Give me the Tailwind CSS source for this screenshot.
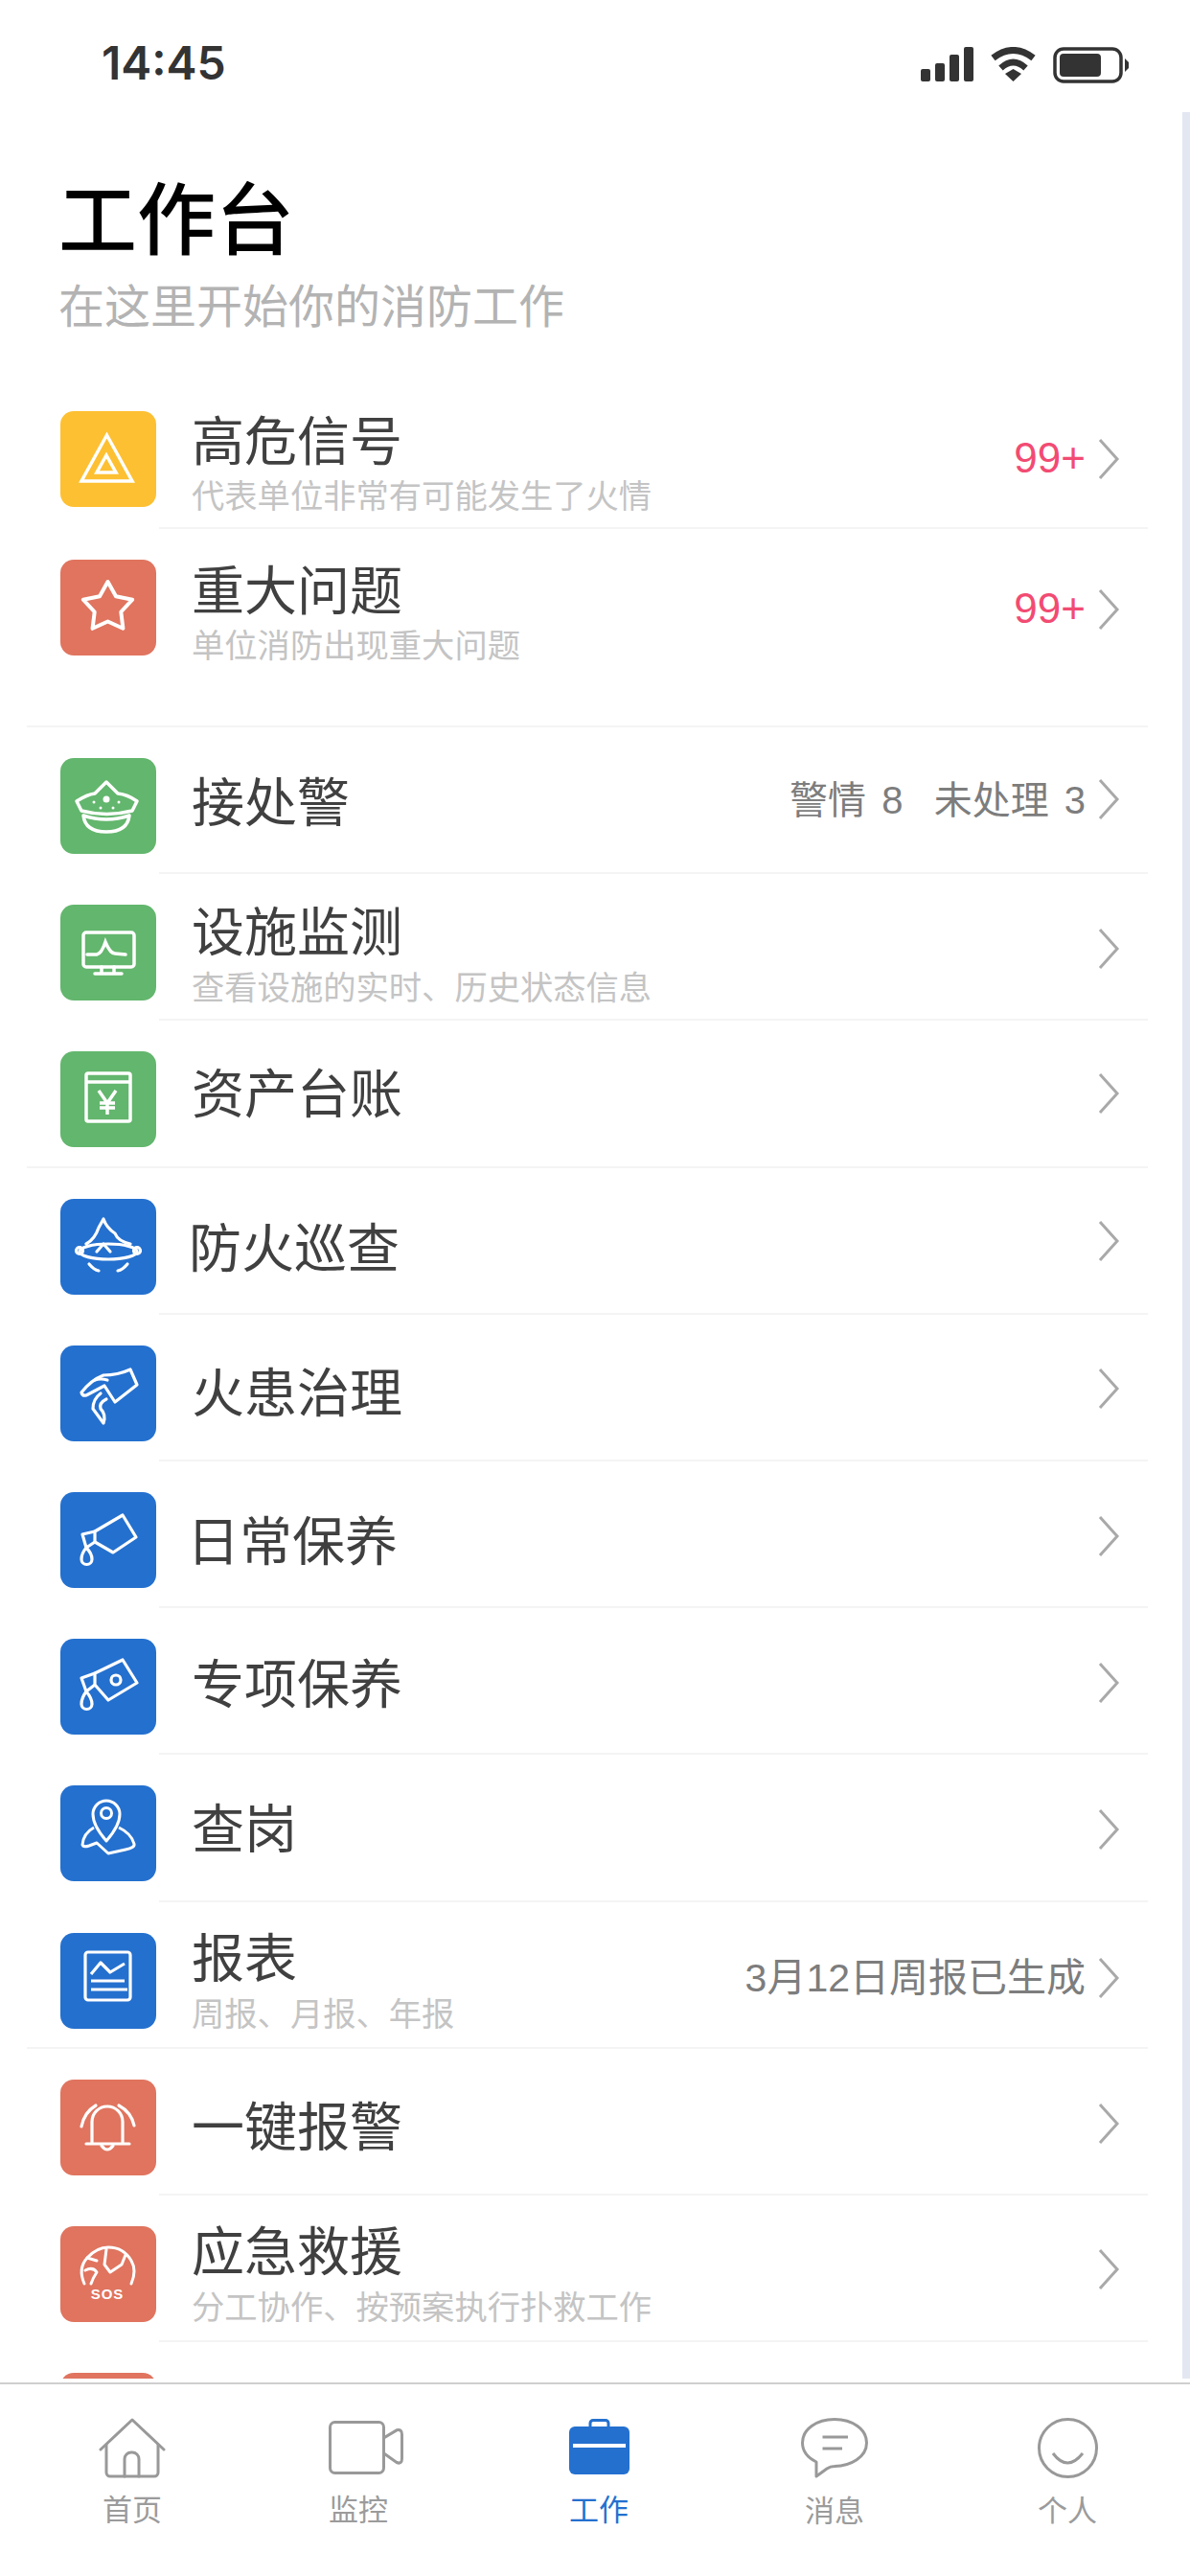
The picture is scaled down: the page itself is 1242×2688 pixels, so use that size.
<!DOCTYPE html>
<html lang="zh-CN">
<head>
<meta charset="UTF-8">
<meta name="viewport" content="width=device-width, initial-scale=1.0">
<title>工作台</title>
<script src="https://cdn.jsdelivr.net/npm/@tailwindcss/browser@4"></script>
</head>
<body class="bg-white font-['Noto_Sans_CJK_SC','Noto_Sans',sans-serif]">
<div class="w-[1242px] h-[2688px] overflow-hidden flex flex-col bg-white">

  <!-- status bar -->
  <div class="h-[117px] shrink-0 flex items-start pt-[38px]">
    <span class="ml-[106px] text-[48px] leading-[56px] font-semibold text-[#333] font-['Inter',sans-serif]">14:45</span>
    <div class="ml-auto mr-[63px] mt-[11px] flex items-start">
      <svg class="w-[55px] h-[36px]" viewBox="0 0 55 36" fill="#333"><rect x="0" y="23" width="10" height="13" rx="2"/><rect x="15" y="17" width="10" height="19" rx="2"/><rect x="30" y="8" width="10" height="28" rx="2"/><rect x="45" y="0" width="10" height="36" rx="2"/></svg>
      <svg class="ml-[17px] w-[49px] h-[36px]" viewBox="0 0 49 36" fill="none" stroke="#333"><path d="M3.5 11.5Q24.5 -4.500 45.500 11.500" stroke-width="7"/><path d="M11.500 22Q24.500 10 37.500 22" stroke-width="6.500"/><path d="M16 28L24.500 23L33 28L24.500 36Z" fill="#333" stroke="none"/></svg>
      <svg class="ml-[17px] w-[80px] h-[38px]" viewBox="0 0 80 38" fill="none"><rect x="2" y="2" width="69" height="34" rx="9" stroke="#333" stroke-width="3.500"/><rect x="7" y="7" width="43" height="24" rx="4" fill="#333"/><path d="M75 12L79 16V22L75 26Z" fill="#333"/></svg>
    </div>
  </div>

  <!-- scrolling list -->
  <div class="relative h-[2365px] shrink-0 overflow-hidden">
    <div class="absolute right-0 top-0 bottom-0 w-[8px] bg-[#e3e7f2]"></div>

    <div class="pl-[61px] pt-[62px] pb-[51px]">
      <h1 class="text-[82px] leading-[90px] font-medium text-black">工作台</h1>
      <p class="mt-[17px] text-[48px] leading-[60px] text-[#b3b3b3]">在这里开始你的消防工作</p>
    </div>

    <!-- 高危信号 -->
    <div class="flex h-[155px]">
      <div class="w-[166px] shrink-0 pl-[63px] pt-[32px]">
        <div class="w-[100px] h-[100px] rounded-[14px] bg-[#fdc032]">
          <svg viewBox="0 0 100 100" fill="none" stroke="#fff" stroke-width="3.500"><path d="M48.500 25L75 73H22Z"/><path d="M48 46L58 64H38Z"/></svg>
        </div>
      </div>
      <div class="w-[1032px] pt-[11px] pr-[29px] pl-[34px] flex items-center border-b-2 border-[#f4f4f5]">
        <div class="mt-[6px]">
          <div class="text-[55px] leading-[66px] text-[#404040]">高危信号</div>
          <div class="-mt-[1px] text-[34.3px] leading-[54px] text-[#c4c4c4]">代表单位非常有可能发生了火情</div>
        </div>
        <div class="ml-auto flex items-center">
          <span class="mb-[3px] text-[44px] leading-[50px] text-[#f24b73] font-['Liberation_Sans',sans-serif]">99+</span>
          <svg class="ml-[12px] w-[24px] h-[44px]" viewBox="0 0 24 44" fill="none" stroke="#a9a9a9" stroke-width="3"><path d="M3 2L21 22L3 42"/></svg>
        </div>
      </div>
    </div>

    <!-- 重大问题 -->
    <div class="flex h-[155px]">
      <div class="w-[166px] shrink-0 pl-[63px] pt-[32px]">
        <div class="w-[100px] h-[100px] rounded-[14px] bg-[#e0745f]">
          <svg viewBox="0 0 100 100" fill="none" stroke="#fff" stroke-width="4" stroke-linejoin="round"><path d="M49.500 23L58 38.300L75.200 41.700L63.300 54.500L65.400 71.800L49.500 64.500L33.600 71.800L35.700 54.500L23.800 41.700L41 38.300Z"/></svg>
        </div>
      </div>
      <div class="w-[1032px] pt-[11px] pr-[29px] pl-[34px] flex items-center">
        <div class="mt-[6px]">
          <div class="text-[55px] leading-[66px] text-[#404040]">重大问题</div>
          <div class="-mt-[1px] text-[34.3px] leading-[54px] text-[#c4c4c4]">单位消防出现重大问题</div>
        </div>
        <div class="ml-auto flex items-center mt-[2px]">
          <span class="mb-[3px] text-[44px] leading-[50px] text-[#f24b73] font-['Liberation_Sans',sans-serif]">99+</span>
          <svg class="ml-[12px] w-[24px] h-[44px]" viewBox="0 0 24 44" fill="none" stroke="#a9a9a9" stroke-width="3"><path d="M3 2L21 22L3 42"/></svg>
        </div>
      </div>
    </div>
    <div class="ml-[28px] w-[1170px] h-[52px] border-b-2 border-[#f4f4f5]"></div>

    <!-- 接处警 -->
    <div class="flex h-[153.2px]">
      <div class="w-[166px] shrink-0 pl-[63px] pt-[32px]">
        <div class="w-[100px] h-[100px] rounded-[14px] bg-[#63b66d]">
          <svg viewBox="0 0 100 100" fill="none" stroke="#fff" stroke-width="3.500" stroke-linejoin="round"><path d="M17 45Q28 38 36 37L48 25L60 37Q70 38 80 45Q77 51 75 55Q48 62 22 55Q20 51 17 45Z"/><path d="M24 60Q48 68 72 60Q70 77 48 77Q26 77 24 60Z"/><circle cx="48" cy="43" r="3.500" fill="#fff" stroke="none"/><circle cx="35" cy="46" r="1.500" fill="#fff" stroke="none"/><circle cx="61" cy="46" r="1.500" fill="#fff" stroke="none"/><circle cx="42" cy="52" r="1.500" fill="#fff" stroke="none"/><circle cx="55" cy="52" r="1.500" fill="#fff" stroke="none"/></svg>
        </div>
      </div>
      <div class="w-[1032px] pt-[14px] pr-[29px] pl-[34px] flex items-center border-b-2 border-[#f4f4f5]">
        <div class="mb-[18px] text-[55px] leading-[66px] text-[#404040]">接处警</div>
        <div class="ml-auto mb-[16px] flex items-center">
          <span class="mt-[3px] text-[40px] leading-[50px] text-[#7d7d7d] whitespace-pre font-['Liberation_Sans','Noto_Sans_CJK_SC',sans-serif] [word-spacing:5px]">警情 8  未处理 3</span>
          <svg class="ml-[12px] w-[24px] h-[44px]" viewBox="0 0 24 44" fill="none" stroke="#a9a9a9" stroke-width="3"><path d="M3 2L21 22L3 42"/></svg>
        </div>
      </div>
    </div>

    <!-- 设施监测 -->
    <div class="flex h-[153.2px]">
      <div class="w-[166px] shrink-0 pl-[63px] pt-[32px]">
        <div class="w-[100px] h-[100px] rounded-[14px] bg-[#63b66d]">
          <svg viewBox="0 0 100 100" fill="none" stroke="#fff" stroke-width="3.500" stroke-linecap="round"><rect x="24" y="29" width="53" height="36" rx="3"/><path d="M28 52H38Q43 51 47 39Q52 51 57 51L68 52"/><path d="M43 65V71M56 65V71M36 72H64"/></svg>
        </div>
      </div>
      <div class="w-[1032px] pt-[14px] pr-[29px] pl-[34px] flex items-center border-b-2 border-[#f4f4f5]">
        <div>
          <div class="text-[55px] leading-[66px] text-[#404040]">设施监测</div>
          <div class="text-[34.3px] leading-[54px] text-[#c4c4c4]">查看设施的实时、历史状态信息</div>
        </div>
        <svg class="ml-auto mb-[10px] w-[24px] h-[44px]" viewBox="0 0 24 44" fill="none" stroke="#a9a9a9" stroke-width="3"><path d="M3 2L21 22L3 42"/></svg>
      </div>
    </div>

    <!-- 资产台账 -->
    <div class="flex h-[153.2px]">
      <div class="w-[138px] shrink-0 ml-[28px] pl-[35px] pt-[32px] border-b-2 border-[#f4f4f5]">
        <div class="w-[100px] h-[100px] rounded-[14px] bg-[#63b66d]">
          <svg viewBox="0 0 100 100" fill="none" stroke="#fff" stroke-width="3.500"><rect x="27" y="23" width="46" height="50" rx="2"/><path d="M27 32H73"/><path d="M40 41L49 54L58 41M41 54H57M41 59H57M49 54V66"/></svg>
        </div>
      </div>
      <div class="w-[1032px] pt-[14px] pr-[29px] pl-[34px] flex items-center border-b-2 border-[#f4f4f5]">
        <div class="mb-[22px] text-[55px] leading-[66px] text-[#404040]">资产台账</div>
        <svg class="ml-auto mb-[13px] w-[24px] h-[44px]" viewBox="0 0 24 44" fill="none" stroke="#a9a9a9" stroke-width="3"><path d="M3 2L21 22L3 42"/></svg>
      </div>
    </div>

    <!-- 防火巡查 -->
    <div class="flex h-[153.2px]">
      <div class="w-[166px] shrink-0 pl-[63px] pt-[32px]">
        <div class="w-[100px] h-[100px] rounded-[14px] bg-[#2470cf]">
          <svg viewBox="0 0 100 100" fill="none" stroke="#fff" stroke-width="3.200" stroke-linejoin="round" stroke-linecap="round"><path d="M27 47Q36 42 40 30L45 21Q48 30 57 36Q60 44 73 47"/><ellipse cx="50" cy="55" rx="30" ry="8"/><circle cx="20" cy="54" r="3.500"/><circle cx="80" cy="54" r="3.500"/><path d="M38 55L45 47L52 55"/><path d="M30 68Q35 74 40 75M70 68Q65 74 60 75"/></svg>
        </div>
      </div>
      <div class="w-[1032px] pt-[14px] pr-[29px] pl-[31px] flex items-center border-b-2 border-[#f4f4f5]">
        <div class="mb-[7px] text-[55px] leading-[66px] text-[#404040]">防火巡查</div>
        <svg class="ml-auto mb-[13px] w-[24px] h-[44px]" viewBox="0 0 24 44" fill="none" stroke="#a9a9a9" stroke-width="3"><path d="M3 2L21 22L3 42"/></svg>
      </div>
    </div>

    <!-- 火患治理 -->
    <div class="flex h-[153.2px]">
      <div class="w-[166px] shrink-0 pl-[63px] pt-[32px]">
        <div class="w-[100px] h-[100px] rounded-[14px] bg-[#2470cf]">
          <svg viewBox="0 0 100 100" fill="none" stroke="#fff" stroke-width="3.200" stroke-linejoin="round" stroke-linecap="round"><path d="M22 49Q32 36 45 31Q60 31 73 25L80 41L57 59L46 42L27 52Q23 53 22 49Z"/><path d="M36 36Q42 34 49 36"/><path d="M42 50Q34 56 34 66L45 81Q48 72 42 66Q40 60 48 56"/></svg>
        </div>
      </div>
      <div class="w-[1032px] pt-[14px] pr-[29px] pl-[34px] flex items-center border-b-2 border-[#f4f4f5]">
        <div class="mb-[10px] text-[55px] leading-[66px] text-[#404040]">火患治理</div>
        <svg class="ml-auto mb-[10px] w-[24px] h-[44px]" viewBox="0 0 24 44" fill="none" stroke="#a9a9a9" stroke-width="3"><path d="M3 2L21 22L3 42"/></svg>
      </div>
    </div>

    <!-- 日常保养 -->
    <div class="flex h-[153.2px]">
      <div class="w-[166px] shrink-0 pl-[63px] pt-[32px]">
        <div class="w-[100px] h-[100px] rounded-[14px] bg-[#2470cf]">
          <svg viewBox="0 0 100 100" fill="none" stroke="#fff" stroke-width="3.200" stroke-linejoin="round"><path d="M36 41L65 24L79 47L55 63L36 52Z"/><path d="M36 41L23 44L27 58L36 52"/><path d="M27 58Q22 64 22 70A5.500 5.500 0 0 0 33 70Q33 64 27 58Z"/></svg>
        </div>
      </div>
      <div class="w-[1032px] pt-[14px] pr-[29px] pl-[29px] flex items-center border-b-2 border-[#f4f4f5]">
        <div class="mb-[7px] text-[55px] leading-[66px] text-[#404040]">日常保养</div>
        <svg class="ml-auto mb-[10px] w-[24px] h-[44px]" viewBox="0 0 24 44" fill="none" stroke="#a9a9a9" stroke-width="3"><path d="M3 2L21 22L3 42"/></svg>
      </div>
    </div>

    <!-- 专项保养 -->
    <div class="flex h-[153.2px]">
      <div class="w-[166px] shrink-0 pl-[63px] pt-[32px]">
        <div class="w-[100px] h-[100px] rounded-[14px] bg-[#2470cf]">
          <svg viewBox="0 0 100 100" fill="none" stroke="#fff" stroke-width="3.200" stroke-linejoin="round"><path d="M36 36L65 22L80 46L50 64L36 48Z"/><path d="M36 36L22 41L27 55L36 48"/><circle cx="58" cy="43" r="5"/><path d="M27 55Q22 62 22 68A5.500 5.500 0 0 0 33 68Q33 62 27 55Z"/></svg>
        </div>
      </div>
      <div class="w-[1032px] pt-[14px] pr-[29px] pl-[34px] flex items-center border-b-2 border-[#f4f4f5]">
        <div class="mb-[15px] text-[55px] leading-[66px] text-[#404040]">专项保养</div>
        <svg class="ml-auto mb-[10px] w-[24px] h-[44px]" viewBox="0 0 24 44" fill="none" stroke="#a9a9a9" stroke-width="3"><path d="M3 2L21 22L3 42"/></svg>
      </div>
    </div>

    <!-- 查岗 -->
    <div class="flex h-[153.2px]">
      <div class="w-[166px] shrink-0 pl-[63px] pt-[32px]">
        <div class="w-[100px] h-[100px] rounded-[14px] bg-[#2470cf]">
          <svg viewBox="0 0 100 100" fill="none" stroke="#fff" stroke-width="3" stroke-linejoin="round"><path d="M48 58Q34 42 34 30A14 14 0 0 1 62 30Q62 42 48 58Z"/><circle cx="48" cy="29" r="5.500"/><path d="M35 44Q24 50 23 62Q24 65 30 63L38 60L50 71L68 67Q78 65 77 61Q74 50 61 44"/></svg>
        </div>
      </div>
      <div class="w-[1032px] pt-[14px] pr-[29px] pl-[34px] flex items-center border-b-2 border-[#f4f4f5]">
        <div class="mb-[19px] text-[55px] leading-[66px] text-[#404040]">查岗</div>
        <svg class="ml-auto mb-[10px] w-[24px] h-[44px]" viewBox="0 0 24 44" fill="none" stroke="#a9a9a9" stroke-width="3"><path d="M3 2L21 22L3 42"/></svg>
      </div>
    </div>

    <!-- 报表 -->
    <div class="flex h-[153.2px]">
      <div class="w-[138px] shrink-0 ml-[28px] pl-[35px] pt-[32px] border-b-2 border-[#f4f4f5]">
        <div class="w-[100px] h-[100px] rounded-[14px] bg-[#2470cf]">
          <svg viewBox="0 0 100 100" fill="none" stroke="#fff" stroke-width="3.200" stroke-linejoin="round"><rect x="26" y="20" width="47" height="50" rx="3"/><path d="M32 43L42 31L52 41L67 32"/><path d="M32 50H67M32 59H70"/></svg>
        </div>
      </div>
      <div class="w-[1032px] pt-[14px] pr-[29px] pl-[34px] flex items-center border-b-2 border-[#f4f4f5]">
        <div class="mb-[2px]">
          <div class="text-[55px] leading-[66px] text-[#404040]">报表</div>
          <div class="text-[34.3px] leading-[54px] text-[#c4c4c4]">周报、月报、年报</div>
        </div>
        <div class="ml-auto mb-[6px] flex items-center">
          <span class="text-[41px] leading-[50px] text-[#7d7d7d] font-['Liberation_Sans','Noto_Sans_CJK_SC',sans-serif]">3月12日周报已生成</span>
          <svg class="ml-[12px] w-[24px] h-[44px]" viewBox="0 0 24 44" fill="none" stroke="#a9a9a9" stroke-width="3"><path d="M3 2L21 22L3 42"/></svg>
        </div>
      </div>
    </div>

    <!-- 一键报警 -->
    <div class="flex h-[153.2px]">
      <div class="w-[166px] shrink-0 pl-[63px] pt-[32px]">
        <div class="w-[100px] h-[100px] rounded-[14px] bg-[#e0745f]">
          <svg viewBox="0 0 100 100" fill="none" stroke="#fff" stroke-width="3.200" stroke-linecap="round"><path d="M33 66V44A16 16 0 0 1 65 44V66"/><path d="M27 67H72"/><path d="M43 69Q49 77 55 69"/><path d="M22 49Q25 34 37 27M77 48Q74 34 61 27"/></svg>
        </div>
      </div>
      <div class="w-[1032px] pt-[14px] pr-[29px] pl-[34px] flex items-center border-b-2 border-[#f4f4f5]">
        <div class="mb-[10px] text-[55px] leading-[66px] text-[#404040]">一键报警</div>
        <svg class="ml-auto mb-[8px] w-[24px] h-[44px]" viewBox="0 0 24 44" fill="none" stroke="#a9a9a9" stroke-width="3"><path d="M3 2L21 22L3 42"/></svg>
      </div>
    </div>

    <!-- 应急救援 -->
    <div class="flex h-[153.2px]">
      <div class="w-[166px] shrink-0 pl-[63px] pt-[32px]">
        <div class="w-[100px] h-[100px] rounded-[14px] bg-[#e0745f]">
          <svg viewBox="0 0 100 100" fill="none" stroke="#fff" stroke-width="3" stroke-linecap="round" stroke-linejoin="round"><path d="M25 60Q18 44 28 33Q38 22 50 22Q66 22 74 36Q80 46 74 60"/><path d="M26 46Q34 42 38 48Q34 54 32 60M48 24L46 40L52 48L64 40L68 30M28 33L38 36"/><text x="49" y="76" text-anchor="middle" font-family="Liberation Sans, sans-serif" font-size="15" font-weight="700" fill="#fff" stroke="none" letter-spacing="1">SOS</text></svg>
        </div>
      </div>
      <div class="w-[1032px] pt-[14px] pr-[29px] pl-[34px] flex items-center border-b-2 border-[#f4f4f5]">
        <div class="mb-[2px]">
          <div class="text-[55px] leading-[66px] text-[#404040]">应急救援</div>
          <div class="text-[34.3px] leading-[54px] text-[#c4c4c4]">分工协作、按预案执行扑救工作</div>
        </div>
        <svg class="ml-auto mb-[10px] w-[24px] h-[44px]" viewBox="0 0 24 44" fill="none" stroke="#a9a9a9" stroke-width="3"><path d="M3 2L21 22L3 42"/></svg>
      </div>
    </div>

    <!-- next row, cut off by the tab bar -->
    <div class="flex h-[153px]">
      <div class="w-[166px] shrink-0 pl-[63px] pt-[32px]">
        <div class="w-[100px] h-[100px] rounded-[14px] bg-[#e0745f]"></div>
      </div>
    </div>
  </div>

  <!-- tab bar -->
  <div class="mt-[4px] flex-1 border-t-2 border-[#cfcfcf] flex items-start text-[31px] leading-[40px] text-[#9b9b9b]">
    <div class="ml-[98px] w-[80px] flex flex-col items-center">
      <svg class="mt-[35px] w-[70px] h-[64px]" viewBox="0 0 70 64" fill="none" stroke="#999" stroke-width="3" stroke-linecap="round" stroke-linejoin="round"><path d="M2 33L35 2L68 33"/><path d="M8 28V57A4 4 0 0 0 12 61H58A4 4 0 0 0 62 57V28"/><path d="M27 61V43A7 7 0 0 1 34 36H35A7 7 0 0 1 42 43V61"/></svg>
      <span class="mt-[10px]">首页</span>
    </div>
    <div class="ml-[156px] w-[80px] flex flex-col items-center">
      <svg class="mt-[38px] ml-[16px] w-[78px] h-[56px]" viewBox="0 0 78 54" fill="none" stroke="#999" stroke-width="3" stroke-linejoin="round" preserveAspectRatio="none"><rect x="1.500" y="1.500" width="56" height="51" rx="5"/><path d="M58 17L71 9.500Q76.500 8 76.500 14V38Q76.500 44 71 42L58 33"/></svg>
      <span class="mt-[15px]">监控</span>
    </div>
    <div class="ml-[171px] w-[80px] flex flex-col items-center text-[#2470cf]">
      <svg class="mt-[36px] w-[63px] h-[58px]" viewBox="0 0 63 58" fill="#2470cf"><path d="M22 10V4.500A3 3 0 0 1 25 1.500H38A3 3 0 0 1 41 4.500V10" fill="none" stroke="#2470cf" stroke-width="3"/><rect x="0" y="8" width="63" height="50" rx="6"/><rect x="4" y="26" width="55" height="4" fill="#fff"/></svg>
      <span class="mt-[15px]">工作</span>
    </div>
    <div class="ml-[166px] w-[80px] flex flex-col items-center">
      <svg class="mt-[35px] w-[70px] h-[63px]" viewBox="0 0 70 63" fill="none" stroke="#999" stroke-width="3" stroke-linejoin="round"><path d="M16 46C6 41 1.500 34 1.500 26C1.500 12 16 1.500 35 1.500C54 1.500 68.500 12 68.500 26C68.500 41 52 50 35 50.500C32 50.500 30 51 27 53L16 61Z"/><path d="M22.500 20H49M22.500 32H43"/></svg>
      <span class="mt-[12px]">消息</span>
    </div>
    <div class="ml-[163px] w-[80px] flex flex-col items-center">
      <svg class="mt-[35px] w-[63px] h-[63px]" viewBox="0 0 63 63" fill="none" stroke="#999" stroke-width="3"><circle cx="31.500" cy="31.500" r="30"/><path d="M16 37Q31 57 47 37"/></svg>
      <span class="mt-[12px]">个人</span>
    </div>
  </div>
</div>
</body>
</html>
